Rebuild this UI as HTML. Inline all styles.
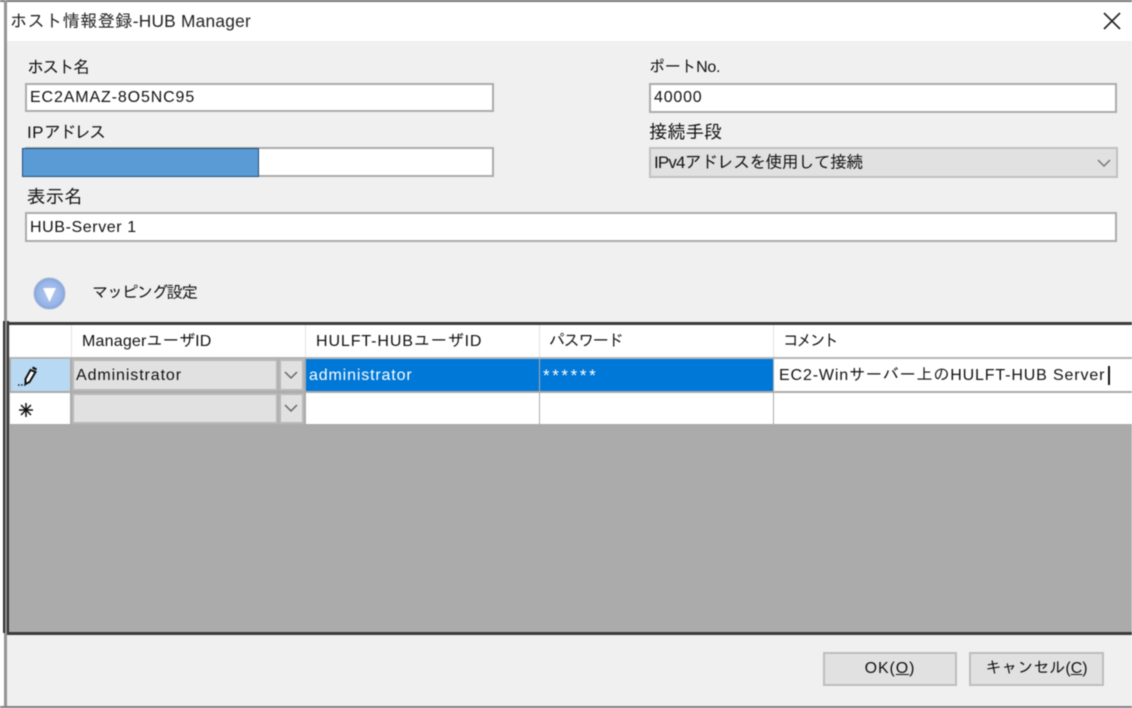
<!DOCTYPE html>
<html lang="ja">
<head>
<meta charset="utf-8">
<title>ホスト情報登録-HUB Manager</title>
<style>
html,body{margin:0;padding:0;background:#fff;}
body{width:1132px;height:708px;overflow:hidden;position:relative;font-family:"Liberation Sans","IPAGothic","Noto Sans CJK JP",sans-serif;font-size:16px;color:#111;}
#w{position:absolute;left:0;top:0;width:1132px;height:708px;overflow:hidden;filter:blur(0.45px);}
.a{position:absolute;box-sizing:border-box;}
.t{position:absolute;white-space:nowrap;line-height:20px;}
.in{position:absolute;box-sizing:border-box;background:#fff;border:2px solid #ababab;}
.chev{position:absolute;}
</style>
</head>
<body>
<div id="w">
<div class="a" style="left:0;top:0;width:1132px;height:2px;background:#777"></div>
<div class="a" style="left:4px;top:0;width:3px;height:708px;background:#949494"></div>
<div class="a" style="left:7px;top:41px;width:1125px;height:665px;background:#f0f0f0"></div>
<div class="a" style="left:0;top:706px;width:1132px;height:2px;background:#808080"></div>

<div class="t" style="left:10px;top:11px;font-size:17.3px;letter-spacing:.25px;color:#222">ホスト情報登録-HUB Manager</div>
<svg class="a" style="left:1102px;top:11px" width="20" height="20" viewBox="0 0 20 20"><path d="M2 2L18 18M18 2L2 18" stroke="#222" stroke-width="1.6" fill="none"/></svg>

<div class="t" style="left:27px;top:58px;font-size:17px;letter-spacing:-1.7px">ホスト名</div>
<div class="in" style="left:25px;top:83px;width:469px;height:29px"></div>
<div class="t" style="left:30px;top:88px;letter-spacing:.87px">EC2AMAZ-8O5NC95</div>

<div class="t" style="left:27px;top:123px;font-size:17px"><span style="letter-spacing:.4px">IP</span><span style="letter-spacing:-1.9px">アドレス</span></div>
<div class="in" style="left:25px;top:147px;width:469px;height:30px"></div>
<div class="a" style="left:22px;top:148px;width:237px;height:29px;background:#5b9bd5;border:1.5px solid #1f4e79"></div>

<div class="t" style="left:27px;top:187px;font-size:18.5px">表示名</div>
<div class="in" style="left:25px;top:212px;width:1092px;height:30px"></div>
<div class="t" style="left:30px;top:218px;letter-spacing:.6px">HUB-Server 1</div>

<div class="t" style="left:649px;top:58px;font-size:16px;letter-spacing:-.3px">ポートNo.</div>
<div class="in" style="left:649px;top:83px;width:468px;height:30px"></div>
<div class="t" style="left:654px;top:88px;letter-spacing:.8px">40000</div>

<div class="t" style="left:649px;top:122px;font-size:18.3px">接続手段</div>
<div class="a" style="left:649px;top:147px;width:469px;height:31px;background:#e1e1e1;border:2px solid #c0c0c0"></div>
<div class="t" style="left:654px;top:153px;font-size:17px;letter-spacing:-.85px">IPv4アドレスを使用して接続</div>
<svg class="chev" style="left:1096px;top:158px" width="16" height="10" viewBox="0 0 16 10"><path d="M2 2L8 8L14 2" stroke="#777" stroke-width="1.5" fill="none"/></svg>

<svg class="a" style="left:33px;top:277px" width="33" height="33" viewBox="0 0 33 33">
<defs><radialGradient id="g" cx=".5" cy=".5" r=".55"><stop offset="0" stop-color="#b4c9f0"/><stop offset=".7" stop-color="#98b5e8"/><stop offset="1" stop-color="#7a9ad2"/></radialGradient></defs>
<circle cx="16.5" cy="16.5" r="15.5" fill="url(#g)" stroke="#a8b8d4"/>
<path d="M10 11H23L16.5 25Z" fill="#fff"/>
</svg>
<div class="t" style="left:92px;top:283px;font-size:16.5px;letter-spacing:-1.6px">マッピング設定</div>

<!-- grid -->
<div class="a" style="left:3px;top:321px;width:2px;height:312px;background:#333"></div>
<div class="a" style="left:7px;top:321px;width:2px;height:312px;background:#333"></div>
<div class="a" style="left:7px;top:322px;width:1125px;height:3px;background:#3a3a3a"></div>
<div class="a" style="left:9px;top:325px;width:1123px;height:307px;background:#ababab"></div>
<div class="a" style="left:7px;top:632px;width:1125px;height:3px;background:#3a3a3a"></div>

<!-- header -->
<div class="a" style="left:9px;top:325px;width:1123px;height:33px;background:#e2e2e2"></div>
<div class="a" style="left:9px;top:357px;width:1123px;height:2px;background:#b4b4b4"></div>
<div class="a" style="left:10px;top:325px;width:61px;height:32px;background:#fff"></div>
<div class="a" style="left:72px;top:325px;width:233px;height:32px;background:#fff"></div>
<div class="a" style="left:306px;top:325px;width:233px;height:32px;background:#fff"></div>
<div class="a" style="left:540px;top:325px;width:233px;height:32px;background:#fff"></div>
<div class="a" style="left:774px;top:325px;width:358px;height:32px;background:#fff"></div>
<div class="t" style="left:82px;top:332px;letter-spacing:.2px">ManagerユーザID</div>
<div class="t" style="left:316px;top:332px;letter-spacing:.9px">HULFT-HUBユーザID</div>
<div class="t" style="left:549px;top:332px;letter-spacing:-1.4px">パスワード</div>
<div class="t" style="left:783px;top:332px;letter-spacing:-2.7px">コメント</div>

<!-- row header -->
<div class="a" style="left:11px;top:359px;width:59px;height:32px;background:#b8d9f3"></div>
<div class="a" style="left:10px;top:393px;width:60px;height:31px;background:#fff"></div>
<svg class="a" style="left:17px;top:365px" width="24" height="24" viewBox="0 0 24 24"><path d="M13.5 5L18.5 7L12.5 17L8.5 19L8.5 14Z" fill="#fff" stroke="#111" stroke-width="2"/><path d="M15.5 2.5L19.5 4.5" stroke="#111" stroke-width="2.2"/><path d="M1 20H9" stroke="#222" stroke-width="1.4" stroke-dasharray="1.6 1.4"/></svg>
<svg class="a" style="left:18px;top:402px" width="16" height="16" viewBox="0 0 16 16"><path d="M8 1V15M1 8H15M3 3L13 13M13 3L3 13" stroke="#111" stroke-width="1.5"/></svg>

<!-- col 1 combos -->
<div class="a" style="left:72px;top:359px;width:206px;height:32px;background:#e1e1e1;border:2px solid #b8b8b8"></div>
<div class="a" style="left:279px;top:359px;width:25px;height:32px;background:#e1e1e1;border:2px solid #b8b8b8"></div>
<div class="a" style="left:72px;top:393px;width:206px;height:31px;background:#e1e1e1;border:2px solid #b8b8b8"></div>
<div class="a" style="left:279px;top:393px;width:25px;height:31px;background:#e1e1e1;border:2px solid #b8b8b8"></div>
<div class="t" style="left:76px;top:366px;letter-spacing:.9px">Administrator</div>
<svg class="chev" style="left:283px;top:370px" width="16" height="10" viewBox="0 0 16 10"><path d="M2 2L8 8L14 2" stroke="#666" stroke-width="1.5" fill="none"/></svg>
<svg class="chev" style="left:283px;top:403px" width="16" height="10" viewBox="0 0 16 10"><path d="M2 2L8 8L14 2" stroke="#666" stroke-width="1.5" fill="none"/></svg>

<!-- cells row 1 -->
<div class="a" style="left:306px;top:359px;width:233px;height:32px;background:#0078d7"></div>
<div class="a" style="left:540px;top:359px;width:233px;height:32px;background:#0078d7"></div>
<div class="a" style="left:774px;top:359px;width:358px;height:32px;background:#fff"></div>
<div class="t" style="left:309px;top:366px;color:#fff;letter-spacing:.85px">administrator</div>
<div class="t" style="left:543px;top:366px;color:#fff;font-size:17px;letter-spacing:2.6px">******</div>
<div class="t" style="left:779px;top:366px;letter-spacing:.86px">EC2-Winサーバー上のHULFT-HUB Server</div>
<div class="a" style="left:1108px;top:366px;width:1.5px;height:19px;background:#111"></div>

<!-- cells row 2 -->
<div class="a" style="left:306px;top:393px;width:233px;height:31px;background:#fff"></div>
<div class="a" style="left:540px;top:393px;width:233px;height:31px;background:#fff"></div>
<div class="a" style="left:774px;top:393px;width:358px;height:31px;background:#fff"></div>

<!-- buttons -->
<div class="a" style="left:823px;top:652px;width:134px;height:34px;background:#e1e1e1;border:2px solid #bdbdbd"></div>
<div class="t" style="left:823px;top:659px;width:134px;text-align:center;letter-spacing:.9px">OK(<u>O</u>)</div>
<div class="a" style="left:969px;top:652px;width:135px;height:34px;background:#e1e1e1;border:2px solid #bdbdbd"></div>
<div class="t" style="left:969px;top:659px;width:135px;text-align:center">キャンセル(<u>C</u>)</div>
</div>
</body>
</html>
